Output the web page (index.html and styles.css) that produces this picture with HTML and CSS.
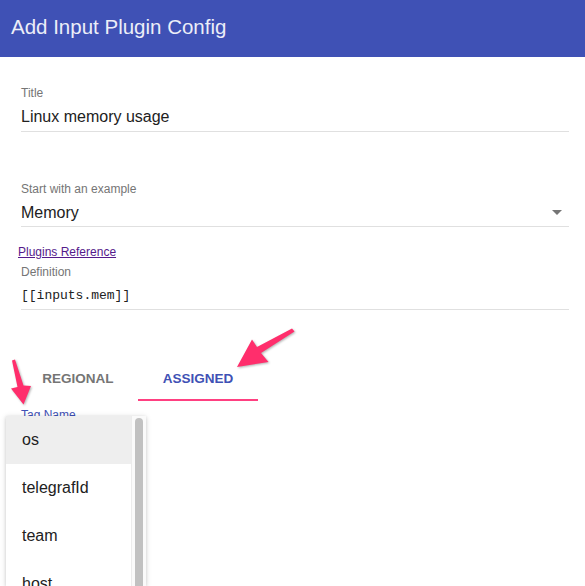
FILE: index.html
```html
<!DOCTYPE html>
<html>
<head>
<meta charset="utf-8">
<link rel="stylesheet" href="styles.css">
</head>
<body>
<header class="appbar">Add Input Plugin Config</header>
<main class="content">
  <div class="field field-title">
    <div class="label">Title</div>
    <div class="value">Linux memory usage</div>
  </div>
  <div class="field field-example">
    <div class="label">Start with an example</div>
    <div class="value select"><span>Memory</span><span class="caret"></span></div>
  </div>
  <a class="ref-link" href="#">Plugins Reference</a>
  <div class="field field-def">
    <div class="label label-def">Definition</div>
    <div class="value code">[[inputs.mem]]</div>
  </div>
  <div class="tabs">
    <div class="tab">REGIONAL</div>
    <div class="tab active">ASSIGNED</div>
  </div>
  <div class="tag-label">Tag Name</div>
</main>
<div class="menu">
  <div class="menu-items">
    <div class="item hover">os</div>
    <div class="item">telegrafId</div>
    <div class="item">team</div>
    <div class="item">host</div>
  </div>
  <div class="track"><div class="thumb"></div></div>
</div>
<svg class="arrows" width="585" height="586" viewBox="0 0 585 586">
  <polygon points="12,360.5 17.5,387 11,388.5 23.5,404.5 31,386 23.5,385.5 15,359.5"/>
  <polygon points="292,328.5 257,347 252,339.5 237,367 268.5,362 261,353 294.5,331.5"/>
</svg>
</body>
</html>
```
FILE: styles.css
```css
html, body {
  margin: 0;
  padding: 0;
  background: #fff;
  width: 585px;
  height: 586px;
  overflow: hidden;
  font-family: "Liberation Sans", Arial, sans-serif;
}
.appbar {
  height: 57px;
  box-sizing: border-box;
  padding: 15px 0 0 11px;
  background: #3f51b5;
  color: #eceef8;
  font-size: 20.5px;
  line-height: 23px;
}
.content {
  padding: 0 16px 0 18px;
  display: flex;
  flex-direction: column;
  align-items: flex-start;
}
.field {
  margin-left: 3px;
  align-self: stretch;
}
.field-title { margin-top: 29px; }
.field-example { margin-top: 50px; }
.label {
  font-size: 12px;
  line-height: 15px;
  color: #757575;
  margin-bottom: 6px;
}
.value {
  font-size: 16px;
  line-height: 20px;
  color: #212121;
  padding-bottom: 3.5px;
  border-bottom: 1px solid #e0e0e0;
}
.select {
  display: flex;
  justify-content: space-between;
  align-items: center;
}
.caret {
  width: 0;
  height: 0;
  border-left: 5px solid transparent;
  border-right: 5px solid transparent;
  border-top: 5px solid #757575;
  margin-right: 7px;
}
.ref-link {
  margin-top: 18px;
  font-size: 12px;
  line-height: 15px;
  color: #551a8b;
  text-decoration: underline;
}
.field-def { margin-top: 5px; }
.label-def { margin-bottom: 7px; }
.code {
  font-family: "Liberation Mono", "Courier New", monospace;
  font-size: 13px;
  line-height: 17px;
  padding-bottom: 5px;
}
.tabs {
  display: flex;
  margin-top: 43px;
}
.tab {
  width: 120px;
  height: 48px;
  box-sizing: border-box;
  padding-top: 17.5px;
  text-align: center;
  font-size: 13.5px;
  line-height: 16px;
  font-weight: bold;
  color: #757575;
  border-bottom: 2px solid transparent;
}
.tab.active {
  color: #3f51b5;
  border-bottom-color: #ff4081;
}
.tag-label {
  margin: 7px 0 0 3px;
  font-size: 12px;
  line-height: 15px;
  color: #3f51b5;
}
.menu {
  position: absolute;
  left: 6px;
  top: 416px;
  width: 140px;
  height: 170px;
  overflow: hidden;
  background: #fff;
  display: flex;
  box-shadow: 0 1px 6px rgba(0,0,0,0.14), 0 1px 3px rgba(0,0,0,0.12);
}
.menu-items {
  width: 125px;
}
.item {
  height: 48px;
  line-height: 48px;
  padding-left: 16px;
  font-size: 16px;
  color: #212121;
}
.item.hover {
  background: #eeeeee;
}
.track {
  width: 15px;
  box-sizing: border-box;
  background: #fafafa;
  border-left: 1px solid #ececec;
  padding: 2px 0 0 3px;
}
.thumb {
  width: 8px;
  height: 200px;
  border-radius: 4px;
  background: #c1c1c1;
}
.arrows {
  position: absolute;
  left: 0;
  top: 0;
  pointer-events: none;
  fill: #ff2e6c;
  filter: drop-shadow(1px 1px 1px rgba(0,0,0,0.3));
}
```
